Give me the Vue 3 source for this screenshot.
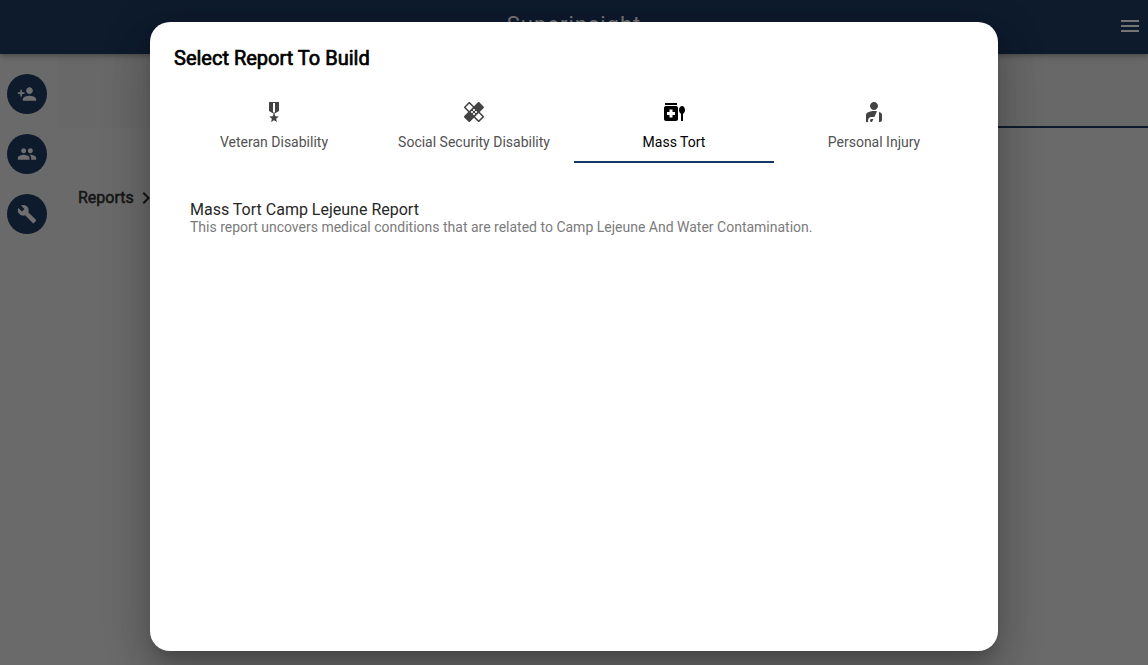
<script setup>
const navItems = [
  { name: 'add-person', path: 'M15 12c2.21 0 4-1.79 4-4s-1.79-4-4-4-4 1.79-4 4 1.79 4 4 4zm-9-2V7H4v3H1v2h3v3h2v-3h3v-2H6zm9 4c-2.67 0-8 1.34-8 4v2h16v-2c0-2.66-5.33-4-8-4z' },
  { name: 'people', path: 'M16 11c1.66 0 2.99-1.34 2.99-3S17.66 5 16 5c-1.66 0-3 1.34-3 3s1.34 3 3 3zm-8 0c1.66 0 2.99-1.34 2.99-3S9.66 5 8 5C6.34 5 5 6.34 5 8s1.34 3 3 3zm0 2c-2.33 0-7 1.17-7 3.5V19h14v-2.5c0-2.33-4.67-3.5-7-3.5zm8 0c-.29 0-.62.02-.97.05 1.16.84 1.97 1.97 1.97 3.45V19h6v-2.5c0-2.33-4.67-3.5-7-3.5z' },
  { name: 'tools', path: 'M22.7 19l-9.1-9.1c.9-2.3.4-5-1.5-6.9-2-2-5-2.4-7.4-1.3L9 6 6 9 1.6 4.7C.4 7.1.9 10.1 2.9 12.1c1.9 1.9 4.6 2.4 6.9 1.5l9.1 9.1c.4.4 1 .4 1.4 0l2.3-2.3c.5-.4.5-1.1.1-1.4z' },
]

const tabs = [
  { label: 'Veteran Disability', path: 'M17 10.43V2H7v8.43c0 .35.18.68.49.86l4.18 2.51-.99 2.34-3.41.29 2.59 2.24L9.07 22 12 20.23 14.93 22l-.78-3.33 2.59-2.24-3.41-.29-.99-2.34 4.18-2.51c.3-.18.48-.5.48-.86zM13 12.23l-1 .6-1-.6V3h2v9.23z' },
  { label: 'Social Security Disability', path: 'M17.73 12.02l3.98-3.98c.39-.39.39-1.02 0-1.41l-4.34-4.34c-.39-.39-1.02-.39-1.41 0l-3.98 3.98L8 2.29C7.8 2.1 7.55 2 7.29 2c-.25 0-.51.1-.7.29L2.25 6.63c-.39.39-.39 1.02 0 1.41l3.98 3.98L2.25 16c-.39.39-.39 1.02 0 1.41l4.34 4.34c.39.39 1.02.39 1.41 0l3.98-3.98 3.98 3.98c.2.2.45.29.71.29.26 0 .51-.1.71-.29l4.34-4.34c.39-.39.39-1.02 0-1.41l-3.99-3.98zM12 9c.55 0 1 .45 1 1s-.45 1-1 1-1-.45-1-1 .45-1 1-1zm-4.71 1.96L3.66 7.34l3.63-3.63 3.62 3.62-3.62 3.63zM10 13c-.55 0-1-.45-1-1s.45-1 1-1 1 .45 1 1-.45 1-1 1zm2 2c-.55 0-1-.45-1-1s.45-1 1-1 1 .45 1 1-.45 1-1 1zm2-4c.55 0 1 .45 1 1s-.45 1-1 1-1-.45-1-1 .45-1 1-1zm2.66 9.34l-3.63-3.62 3.63-3.63 3.62 3.62-3.62 3.63z' },
  { label: 'Mass Tort', active: true, path: 'M3 3h12v2H3zM14 6H4c-1.1 0-2 .9-2 2v11c0 1.1.9 2 2 2h10c1.1 0 2-.9 2-2V8c0-1.1-.9-2-2-2zm-1 9h-2.5v2.5h-3V15H5v-3h2.5V9.5h3V12H13v3zM20 6c-1.68 0-3 1.76-3 4 0 1.77.83 3.22 2 3.76V21h2v-7.24c1.17-.54 2-1.99 2-3.76 0-2.24-1.32-4-3-4z' },
  { label: 'Personal Injury', path: 'M8 6c0-2.21 1.79-4 4-4s4 1.79 4 4-1.79 4-4 4-4-1.79-4-4zm9 16h1c1.1 0 2-.9 2-2v-4.78c0-1.12-.61-2.15-1.61-2.66-.43-.22-.9-.43-1.39-.62V22zm-4.66-5L15 11.33c-.93-.21-1.93-.33-3-.33-2.53 0-4.71.7-6.39 1.56C4.61 13.07 4 14.1 4 15.22V22h2.34C6.12 21.55 6 21.04 6 20.5 6 18.57 7.57 17 9.5 17h2.84zM10 22l1.41-3H9.5c-.83 0-1.5.67-1.5 1.5S8.67 22 9.5 22h.5z' },
]
</script>

<template>
  <div class="screen">
    <header class="topbar">
      <span class="brand">Superinsight</span>
      <svg class="menu" viewBox="0 0 24 24"><path d="M3 18h18v-2H3v2zm0-5h18v-2H3v2zm0-7v2h18V6H3z" /></svg>
    </header>
    <div class="body">
      <nav class="rail">
        <button v-for="item in navItems" :key="item.name" class="round" :aria-label="item.name">
          <svg viewBox="0 0 24 24"><path :d="item.path" /></svg>
        </button>
      </nav>
      <main class="main">
        <div class="band"><div class="band-active"></div></div>
        <div class="crumbs">
          <span>Reports</span>
          <svg viewBox="0 0 24 24"><path d="M10 6L8.59 7.41 13.17 12l-4.58 4.59L10 18l6-6z" /></svg>
        </div>
      </main>
    </div>

    <div class="overlay">
      <section class="dialog">
        <h1>Select Report To Build</h1>
        <div class="tabs">
          <div v-for="tab in tabs" :key="tab.label" class="tab" :class="{ active: tab.active }">
            <svg viewBox="0 0 24 24"><path :d="tab.path" fill-rule="evenodd" /></svg>
            <span>{{ tab.label }}</span>
          </div>
        </div>
        <article class="report">
          <h2>Mass Tort Camp Lejeune Report</h2>
          <p>This report uncovers medical conditions that are related to Camp Lejeune And Water Contamination.</p>
        </article>
      </section>
    </div>
  </div>
</template>

<style>
body {
  margin: 0;
  overflow: hidden;
}
</style>

<style scoped>
.screen {
  position: relative;
  display: flex;
  flex-direction: column;
  width: 1148px;
  height: 665px;
  overflow: hidden;
  background: #6a6a6a;
  font-family: Roboto, sans-serif;
}
svg {
  display: block;
  fill: currentColor;
}
.topbar {
  position: relative;
  z-index: 1;
  flex: none;
  display: grid;
  grid-template-columns: 30px 1fr 30px;
  height: 54px;
  background: #0e1b2d;
  color: #757575;
  box-shadow: 0 2px 4px -1px rgba(0, 0, 0, 0.2), 0 4px 5px rgba(0, 0, 0, 0.12);
}
.brand {
  grid-column: 2;
  margin-top: 11px;
  text-align: center;
  font-size: 22px;
  line-height: 28px;
  letter-spacing: 1px;
}
.menu {
  width: 24px;
  height: 24px;
  margin-top: 14px;
}
.body {
  flex: 1;
  display: flex;
}
.rail {
  width: 58px;
  box-sizing: border-box;
  padding: 20px 0 0 7px;
  display: flex;
  flex-direction: column;
  gap: 20px;
}
.round {
  display: flex;
  align-items: center;
  justify-content: center;
  width: 40px;
  height: 40px;
  padding: 0;
  border: 0;
  border-radius: 50%;
  background: #0e1b2d;
  color: #6f6f6f;
}
.round svg {
  width: 20px;
  height: 20px;
}
.main {
  flex: 1;
}
.band {
  display: flex;
  justify-content: flex-end;
  height: 74px;
  background: #686868;
}
.band-active {
  width: 50%;
  box-sizing: border-box;
  border-bottom: 2px solid #0e1b2d;
}
.crumbs {
  display: flex;
  align-items: center;
  height: 24px;
  padding: 57px 0 0 20px;
  color: #151515;
  font-size: 16px;
}
.crumbs span {
  -webkit-text-stroke: 0.5px currentColor;
}
.crumbs svg {
  width: 24px;
  height: 24px;
  margin-top: 1px;
}
.overlay {
  position: absolute;
  z-index: 2;
  inset: 0;
  display: flex;
  justify-content: center;
  padding: 22px 0 14px;
}
.dialog {
  width: 848px;
  box-sizing: border-box;
  padding: 24px;
  border-radius: 20px;
  background: #fff;
  box-shadow: 0 11px 15px -7px rgba(0, 0, 0, 0.2), 0 24px 38px 3px rgba(0, 0, 0, 0.14), 0 9px 46px 8px rgba(0, 0, 0, 0.12);
}
h1 {
  margin: 0;
  color: #000;
  font-size: 20px;
  line-height: 24px;
  font-weight: 400;
  -webkit-text-stroke: 0.7px currentColor;
}
.tabs {
  display: grid;
  grid-template-columns: repeat(4, 1fr);
  height: 72px;
  margin-top: 21px;
}
.tab {
  display: flex;
  flex-direction: column;
  align-items: center;
  box-sizing: border-box;
  padding-top: 9px;
  border-bottom: 2px solid transparent;
  color: #525252;
  font-size: 14px;
  line-height: 16px;
}
.tab svg {
  width: 24px;
  height: 24px;
  margin-bottom: 10px;
  color: #434343;
}
.tab.active,
.tab.active svg {
  color: #000;
}
.tab.active {
  border-bottom-color: #183864;
}
.report {
  padding: 38px 16px 0;
}
h2 {
  margin: 0;
  color: #272727;
  font-size: 16px;
  line-height: 18px;
  font-weight: 400;
}
p {
  margin: 0;
  color: #7b7b7b;
  font-size: 14px;
  line-height: 17px;
}
</style>
